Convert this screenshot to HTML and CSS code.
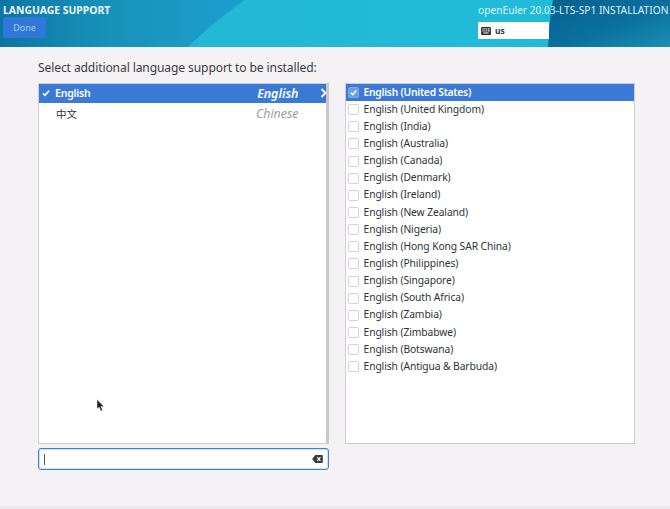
FILE: index.html
```html
<!DOCTYPE html>
<html lang="en">
<head>
<meta charset="utf-8">
<title>Language Support</title>
<link rel="stylesheet" href="styles.css">
</head>
<body>
<div class="app">
  <header class="header">
    <svg class="header-bg" viewBox="0 0 670 47" preserveAspectRatio="none" aria-hidden="true">
      <defs>
        <linearGradient id="hl" x1="0" y1="0" x2="1" y2="0">
          <stop offset="0" stop-color="#0d74a4"/>
          <stop offset="0.4" stop-color="#1690b8"/>
          <stop offset="0.75" stop-color="#1a9ac4"/>
          <stop offset="1" stop-color="#1c9dd0"/>
        </linearGradient>
        <linearGradient id="hc" x1="0" y1="0" x2="1" y2="0">
          <stop offset="0" stop-color="#24b6d2"/>
          <stop offset="1" stop-color="#20bcdb"/>
        </linearGradient>
        <linearGradient id="hd" x1="0" y1="0" x2="1" y2="1">
          <stop offset="0" stop-color="#07608f"/>
          <stop offset="0.55" stop-color="#0a709e"/>
          <stop offset="1" stop-color="#1a8fb4"/>
        </linearGradient>
      </defs>
      <rect width="670" height="47" fill="url(#hc)"/>
      <path d="M188 47C205 30 225 14 245 0H0V47Z" fill="url(#hl)"/>
      <path d="M548 47C549 30 550 14 553 0H670V47Z" fill="url(#hd)"/>
    </svg>
    <div class="header-left">
      <h1 class="title">LANGUAGE SUPPORT</h1>
      <button class="done">Done</button>
    </div>
    <div class="header-right">
      <div class="product">openEuler 20.03-LTS-SP1 INSTALLATION</div>
      <div class="kbd">
        <svg class="kbd-icon" viewBox="0 0 11 9" aria-hidden="true">
          <path d="M1.2 0h8.6C10.5 0 11 .5 11 1.2v6.6C11 8.500 10.500 9 9.800 9H1.200C.5 9 0 8.500 0 7.800V1.200C0 .5.500 0 1.200 0Z" fill="#2b2b2b"/>
          <path d="M1.500 1.500h1.300v1.300H1.500zM3.600 1.500h1.300v1.300H3.600zM5.700 1.500H7v1.300H5.700zM7.800 1.500h1.700v1.300H7.800zM1.500 3.700h1.300V5H1.500zM3.600 3.700h1.300V5H3.600zM5.700 3.700H7V5H5.700zM7.800 3.700h1.700V5H7.800zM2.500 6.200h6v1.200h-6z" fill="#fff"/>
        </svg>
        <span class="kbd-label">us</span>
      </div>
    </div>
  </header>

  <main class="content">
    <p class="prompt">Select additional language support to be installed:</p>
    <div class="columns">
      <div class="left">
        <div class="panel lang-panel">
          <div class="lang-row selected">
            <svg class="tick" viewBox="0 0 8 8" aria-hidden="true"><path d="M1 4.300 3 6.300 7 1.800" fill="none" stroke="#fff" stroke-width="1.700"/></svg>
            <span class="lang-native">English</span>
            <span class="lang-en">English</span>
            <svg class="chevron" viewBox="0 0 7 10" aria-hidden="true"><path d="M1.500 1 5.500 5 1.500 9" fill="none" stroke="#fff" stroke-width="1.800"/></svg>
          </div>
          <div class="lang-row">
            <span class="tick"></span>
            <span class="lang-native cjk">中文</span>
            <span class="lang-en">Chinese</span>
            <span class="chevron"></span>
          </div>
        </div>
        <div class="search">
          <span class="caret"></span>
          <svg class="clear" viewBox="0 0 12 9" aria-hidden="true">
            <path d="M3.500 0H11C11.600 0 12 .4 12 1V8C12 8.600 11.600 9 11 9H3.500L0 4.500Z" fill="#3d3d3d"/>
            <path d="M5.800 2.500 9.300 6.500M9.300 2.500 5.800 6.500" stroke="#fff" stroke-width="1.200"/>
          </svg>
        </div>
      </div>
      <div class="panel locale-panel">
        <div class="locale-row selected"><span class="check on"><svg viewBox="0 0 10 10" aria-hidden="true"><path d="M2 5.200 4.200 7.400 8 2.800" fill="none" stroke="#fff" stroke-width="1.600"/></svg></span><span class="locale-name">English (United States)</span></div>
        <div class="locale-row"><span class="check"></span><span class="locale-name">English (United Kingdom)</span></div>
        <div class="locale-row"><span class="check"></span><span class="locale-name">English (India)</span></div>
        <div class="locale-row"><span class="check"></span><span class="locale-name">English (Australia)</span></div>
        <div class="locale-row"><span class="check"></span><span class="locale-name">English (Canada)</span></div>
        <div class="locale-row"><span class="check"></span><span class="locale-name">English (Denmark)</span></div>
        <div class="locale-row"><span class="check"></span><span class="locale-name">English (Ireland)</span></div>
        <div class="locale-row"><span class="check"></span><span class="locale-name">English (New Zealand)</span></div>
        <div class="locale-row"><span class="check"></span><span class="locale-name">English (Nigeria)</span></div>
        <div class="locale-row"><span class="check"></span><span class="locale-name">English (Hong Kong SAR China)</span></div>
        <div class="locale-row"><span class="check"></span><span class="locale-name">English (Philippines)</span></div>
        <div class="locale-row"><span class="check"></span><span class="locale-name">English (Singapore)</span></div>
        <div class="locale-row"><span class="check"></span><span class="locale-name">English (South Africa)</span></div>
        <div class="locale-row"><span class="check"></span><span class="locale-name">English (Zambia)</span></div>
        <div class="locale-row"><span class="check"></span><span class="locale-name">English (Zimbabwe)</span></div>
        <div class="locale-row"><span class="check"></span><span class="locale-name">English (Botswana)</span></div>
        <div class="locale-row"><span class="check"></span><span class="locale-name">English (Antigua &amp; Barbuda)</span></div>
      </div>
    </div>
    <svg class="pointer" viewBox="0 0 9 13" aria-hidden="true"><path d="M1 .5V10L3.200 8 4.800 12 6.500 11.300 5 7.500H8Z" fill="#222" stroke="#fff" stroke-width=".4"/></svg>
  </main>
  <div class="footer-strip"></div>
</div>
</body>
</html>
```

FILE: styles.css
```css
* { box-sizing: border-box; }
html, body { margin: 0; padding: 0; height: 100%; }
body {
  font-family: "Noto Sans", "Noto Sans CJK SC", sans-serif;
  font-size: 11px;
  color: #2e3436;
  background: #f4f2f5;
  overflow: hidden;
}
.app { width: 670px; height: 509px; display: flex; flex-direction: column; position: relative; }

.header {
  position: relative;
  height: 47px;
  flex: none;
  display: flex;
  justify-content: space-between;
  overflow: hidden;
}
.header-bg { position: absolute; inset: 0; width: 100%; height: 100%; }
.header-left { position: relative; padding: 3px 0 0 3px; display: flex; flex-direction: column; }
.title { margin: 0; font-size: 10.4px; line-height: 14px; font-weight: 700; color: #eef6fa; }
.done {
  width: 43px;
  height: 21px;
  padding: 0;
  border: 0;
  border-radius: 3px;
  background: #2f78d8;
  color: #a9c8ea;
  font: 9px "Noto Sans", sans-serif;
}
.header-right { position: relative; width: 192px; padding-top: 3px; }
.product { font-size: 10.2px; line-height: 14px; color: #dff2f7; white-space: nowrap; }
.kbd {
  margin-top: 5px;
  width: 71px;
  height: 17px;
  background: #fff;
  display: flex;
  align-items: center;
  padding-left: 3px;
  gap: 4px;
}
.kbd-icon { width: 10px; height: 8px; }
.kbd-label { font-size: 8.5px; font-weight: 700; color: #2e3436; }

.content { position: relative; flex: 1; padding: 12px 35px 0 38px; }
.prompt { margin: 0; font-size: 12.1px; letter-spacing: -0.12px; line-height: 17px; color: #3a3d3f; }
.columns { margin-top: 7px; display: flex; gap: 16px; }
.left { width: 291px; display: flex; flex-direction: column; gap: 4px; }
.panel { background: #fff; border: 1px solid #cfcdd0; }
.lang-panel { height: 361px; border-right: 3px solid #c9c8ca; }
.lang-row { display: flex; align-items: center; height: 19px; padding-bottom: 1px; }
.lang-row.selected { background: #3a7ad6; color: #fff; font-weight: 600; }
.tick { width: 8px; height: 8px; margin-left: 3px; flex: none; }
.lang-native { margin-left: 5px; flex: 1; font-size: 10.5px; }
.selected .lang-native { letter-spacing: -0.2px; }
.lang-native.cjk { color: #2e3436; margin-left: 6px; }
.lang-row + .lang-row { height: 21px; }
.lang-en { font-style: italic; font-size: 12.4px; color: #9a9c9e; width: 60px; text-align: right; }
.selected .lang-en { color: #fff; }
.chevron { width: 7px; height: 10px; margin-left: 21px; margin-right: -1px; flex: none; }

.search {
  height: 22px;
  background: #fff;
  border: 1px solid #3584e4;
  border-radius: 3px;
  box-shadow: inset 0 0 0 1px rgba(53, 132, 228, .25);
  display: flex;
  align-items: center;
  justify-content: space-between;
  padding: 0 5px;
}
.caret { width: 1px; height: 11px; background: #555; }
.clear { width: 11px; height: 8px; }

.locale-panel { width: 291px; height: 361px; }
.locale-row { display: flex; align-items: center; height: 17.15px; white-space: nowrap; color: #2e3436; padding-left: 2px; gap: 5px; font-size: 10.3px; letter-spacing: -0.1px; }
.locale-name { margin-top: -2px; }
.locale-row.selected { background: #3a7ad6; color: #fff; font-weight: 600; letter-spacing: -0.25px; }
.check {
  width: 11px;
  height: 11px;
  border: 1px solid #d3d2d4;
  border-radius: 2px;
  background: #fff;
  flex: none;
  display: flex;
}
.check.on { background: #6c9ee0; border-color: #7fa9e2; }
.check svg { width: 100%; height: 100%; }

.pointer { position: absolute; left: 96px; top: 352px; width: 9px; height: 13px; }
.footer-strip { position: absolute; left: 0; right: 0; bottom: 0; height: 3px; background: #ebe9ec; }
```
